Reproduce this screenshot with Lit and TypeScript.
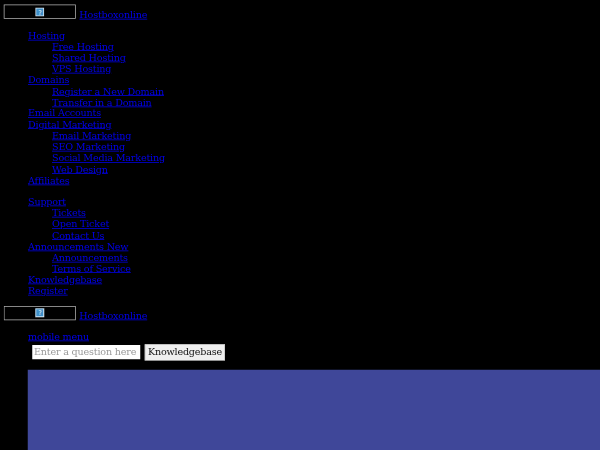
import { LitElement, html, css } from "lit";
import { customElement } from "lit/decorators.js";

type Item = { t: string; c?: string[] };
const main: Item[] = [
  { t: "Hosting", c: ["Free Hosting", "Shared Hosting", "VPS Hosting"] },
  { t: "Domains", c: ["Register a New Domain", "Transfer in a Domain"] },
  { t: "Email Accounts" },
  { t: "Digital Marketing", c: ["Email Marketing", "SEO Marketing", "Social Media Marketing", "Web Design"] },
  { t: "Affiliates" },
];
const second: Item[] = [
  { t: "Support", c: ["Tickets", "Open Ticket", "Contact Us"] },
  { t: "Announcements New", c: ["Announcements", "Terms of Service"] },
  { t: "Knowledgebase" },
  { t: "Register" },
];

@customElement("app-root")
export class AppRoot extends LitElement {
  static styles = css`
    :host {
      display: block;
      width: 600px;
      height: 450px;
      overflow: hidden;
      background: #000;
      filter: blur(0.3px);
    }
    .page {
      width: 800px;
      height: 600px;
      overflow: hidden;
      transform: scale(0.75);
      transform-origin: 0 0;
      font-family: "DejaVu Serif", serif;
      font-size: 12.8px;
      letter-spacing: -0.25px;
      line-height: 14.85px;
    }
    a { color: #0000ee; text-decoration: underline; }
    .logo-row { display: flex; align-items: flex-start; gap: 5px; padding: 6.4px 5.33px 0; height: 20px; }
    .logo-row.next { padding-top: 12px; }
    .logo-row a { margin-top: 6.5px; }
    .logo {
      box-sizing: border-box;
      width: 95.5px;
      height: 19px;
      border: 1.33px solid #b4b4b4;
      display: flex;
      align-items: center;
      justify-content: center;
      flex: none;
    }
    ul { list-style: none; margin: 0; padding: 0; }
    .menu { padding-left: 37.33px; }
    .menu.first { padding-top: 14.2px; }
    .menu.second { padding-top: 14px; }
    .sub { padding-left: 32px; }
    li { display: block; }
    .mobile { padding: 14px 0 0 37.33px; }
    .search { display: flex; align-items: center; gap: 6.67px; padding: 1.8px 0 0 42.67px; height: 22px; }
    .q {
      box-sizing: border-box;
      width: 144px;
      height: 19px;
      background: #fff;
      color: #9a9a9a;
      padding-left: 2.67px;
      display: flex;
      align-items: center;
      white-space: nowrap;
    }
    .btn {
      box-sizing: border-box;
      height: 22px;
      width: 106.67px;
      background: #efefef;
      color: #111;
      border: 1.33px solid #c4c4c4;
      display: flex;
      align-items: center;
      justify-content: center;
      white-space: nowrap;
    }
    .panel { margin: 12.6px 0 0 37.33px; height: 134px; background: #3f4799; }
    .icon { width: 12px; height: 12px; display: block; }
  `;

  private list(items: Item[], cls: string) {
    return html`<ul class="menu ${cls}">
      ${items.map(
        (i) => html`<li>
          <a href="#">${i.t}</a>
          ${i.c
            ? html`<ul class="sub">${i.c.map((s) => html`<li><a href="#">${s}</a></li>`)}</ul>`
            : ""}
        </li>`
      )}
    </ul>`;
  }

  private logo(next = false) {
    return html`<div class="logo-row ${next ? "next" : ""}">
      <div class="logo">
        <svg class="icon" viewBox="0 0 9 9">
          <rect width="9" height="9" fill="#d6e6f2" />
          <rect x="1" y="1" width="7" height="7" fill="#3f8fc8" />
          <text x="4.5" y="7" font-size="6.5" text-anchor="middle" fill="#eaf4fb" font-family="DejaVu Sans">?</text>
        </svg>
      </div>
      <a href="#">Hostboxonline</a>
    </div>`;
  }

  render() {
    return html`<div class="page">
      ${this.logo()}
      ${this.list(main, "first")}
      ${this.list(second, "second")}
      ${this.logo(true)}
      <div class="mobile"><a href="#">mobile menu</a></div>
      <div class="search">
        <div class="q">Enter a question here</div>
        <div class="btn">Knowledgebase</div>
      </div>
      <div class="panel"></div>
    </div>`;
  }
}
